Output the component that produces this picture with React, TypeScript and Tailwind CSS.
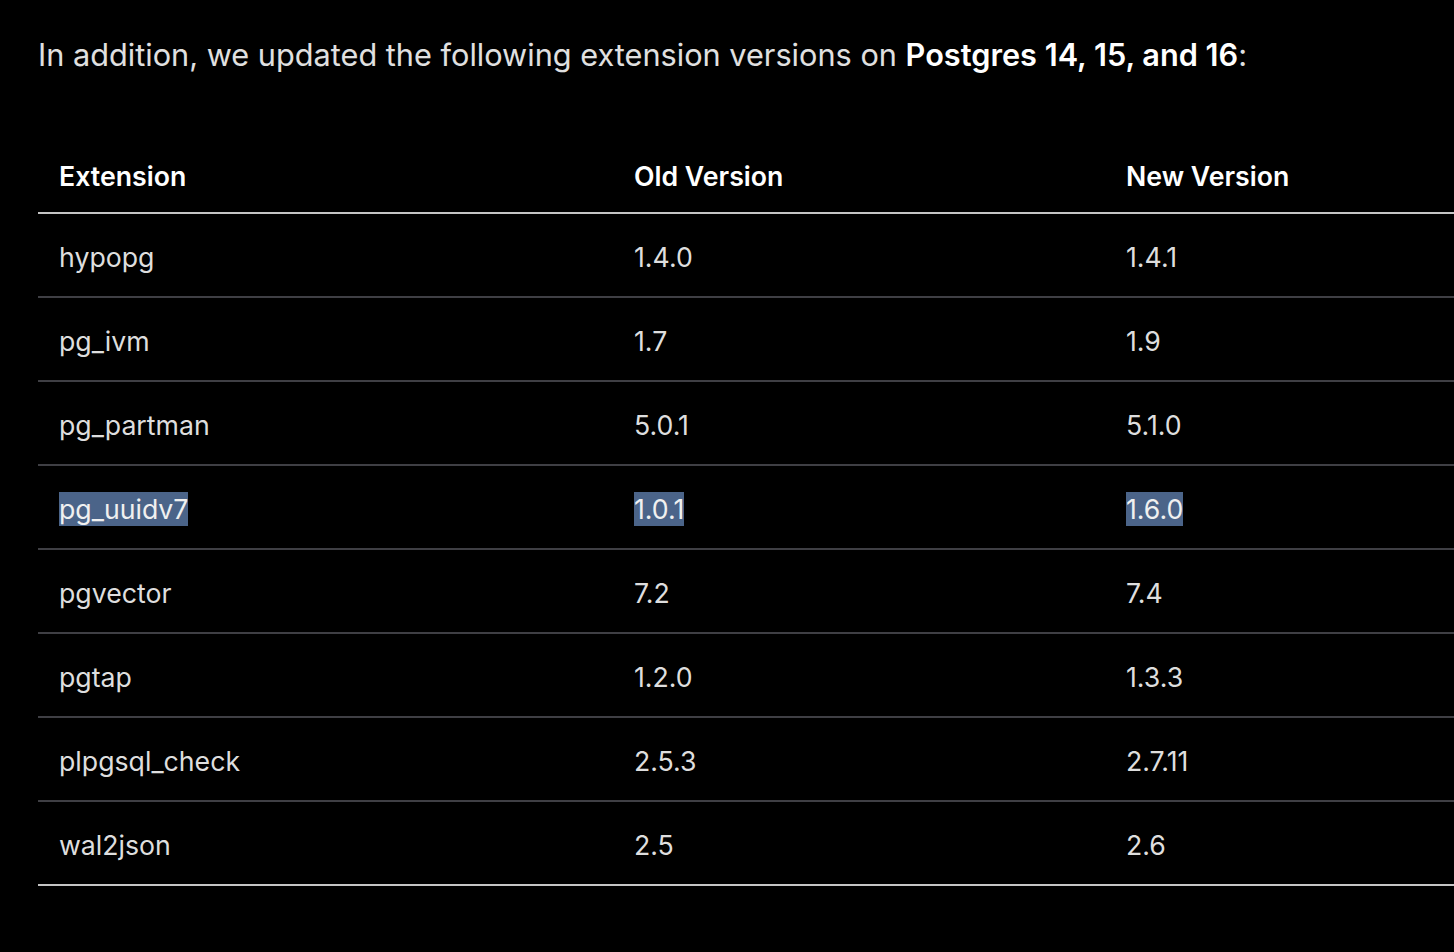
import React from "react";

const rows: [string, string, string][] = [
  ["hypopg", "1.4.0", "1.4.1"],
  ["pg_ivm", "1.7", "1.9"],
  ["pg_partman", "5.0.1", "5.1.0"],
  ["pg_uuidv7", "1.0.1", "1.6.0"],
  ["pgvector", "7.2", "7.4"],
  ["pgtap", "1.2.0", "1.3.3"],
  ["plpgsql_check", "2.5.3", "2.7.11"],
  ["wal2json", "2.5", "2.6"],
];

export default function App() {
  return (
    <div
      className="min-h-[952px] bg-black text-[#e6e6e6] pl-[38px] pt-[34px]"
      style={{ fontFamily: "Inter, 'Noto Sans', sans-serif" }}
    >
      <p className="text-[30.7px] leading-[42px] text-[#e0e0e0]">
        In addition, we updated the following extension versions on{" "}
        <strong className="font-semibold text-white">Postgres 14, 15, and 16</strong>:
      </p>
      <table className="mt-[53px] w-full border-collapse text-[26.7px] leading-[40px]">
        <thead>
          <tr className="border-b-2 border-[#c4c4c4]">
            <th className="w-[575px] h-[84px] pl-[21px] pb-[16px] align-bottom text-left font-semibold text-white">Extension</th>
            <th className="w-[492px] pl-[21px] pb-[16px] align-bottom text-left font-semibold text-white">Old Version</th>
            <th className="pl-[21px] pb-[16px] align-bottom text-left font-semibold text-white">New Version</th>
          </tr>
        </thead>
        <tbody>
          {rows.map((r, i) => {
            const sel = r[0] === "pg_uuidv7";
            const last = i === rows.length - 1;
            return (
              <tr
                key={r[0]}
                className={last ? "border-b-2 border-[#c4c4c4]" : "border-b-2 border-[#3f3f44]"}
              >
                {r.map((c, j) => (
                  <td key={j} className="h-[84px] pl-[21px] pt-[4px] text-[#dedede] align-middle">
                    {sel ? (
                      <span className="bg-[#4b6489] text-[#f0f0f0] py-[1px]">{c}</span>
                    ) : (
                      c
                    )}
                  </td>
                ))}
              </tr>
            );
          })}
        </tbody>
      </table>
    </div>
  );
}
